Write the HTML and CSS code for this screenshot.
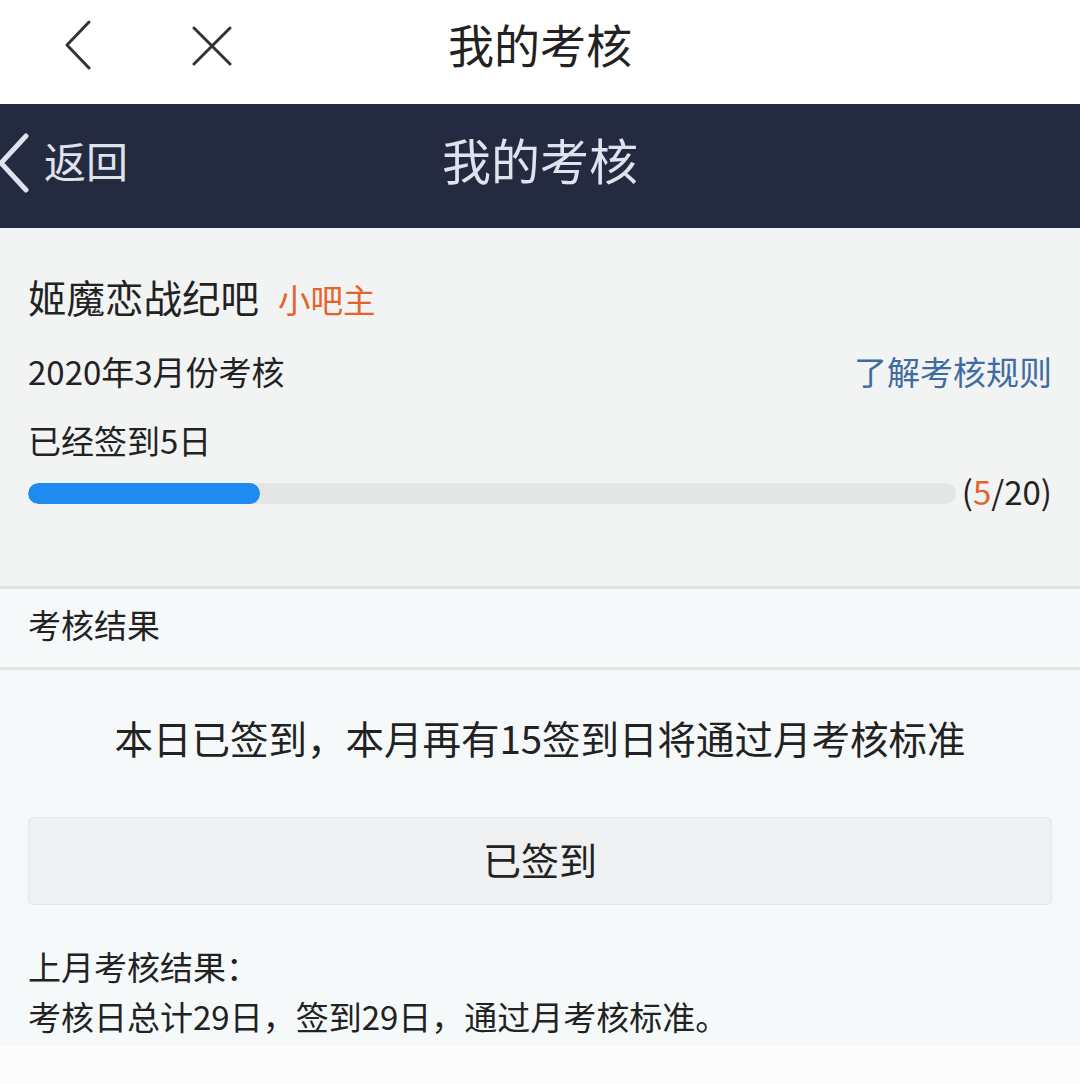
FILE: index.html
```html
<!DOCTYPE html>
<html lang="zh-CN">
<head>
  <meta charset="UTF-8" />
  <title>我的考核</title>
  <link rel="stylesheet" href="styles.css">
</head>
<body>
  <div class="topbar">
    <div class="top-icons">
      <svg class="icon-back" width="30" height="50" viewBox="0 0 30 50">
        <polyline points="25,2 3,25 25,48" fill="none" stroke="#333" stroke-width="3" stroke-linecap="round" stroke-linejoin="round" />
      </svg>
      <svg class="icon-close" width="40" height="40" viewBox="0 0 40 40">
        <path d="M2 2 L38 38 M38 2 L2 38" fill="none" stroke="#333" stroke-width="3" stroke-linecap="round" />
      </svg>
    </div>
    <div class="top-title">我的考核</div>
    <div></div>
  </div>

  <div class="navbar">
    <div class="nav-back">
      <svg width="34" height="62" viewBox="0 0 34 62">
        <polyline points="30,4 5,31 30,58" fill="none" stroke="#dfe3ee" stroke-width="5" stroke-linecap="round" stroke-linejoin="round" />
      </svg>
      <span class="nav-back-text">返回</span>
    </div>
    <div class="nav-title">我的考核</div>
    <div></div>
  </div>

  <div class="summary">
    <div class="bar-name">姬魔恋战纪吧<span class="role">小吧主</span></div>
    <div class="month-row">
      <span>2020年3月份考核</span>
      <a class="rules">了解考核规则</a>
    </div>
    <div class="signed">已经签到5日</div>
    <div class="progress-row">
      <div class="track"><div class="fill" style="width: 25%"></div></div>
      <div class="count">(<span class="now">5</span>/20)</div>
    </div>
  </div>

  <div class="section-head">考核结果</div>

  <div class="result">
    <div class="notice">本日已签到，本月再有15签到日将通过月考核标准</div>
    <button class="sign-btn">已签到</button>
    <div class="last">
      <div>上月考核结果：</div>
      <div>考核日总计29日，签到29日，通过月考核标准。</div>
    </div>
  </div>
</body>
</html>
```

FILE: styles.css
```css
body {
  margin: 0;
  background-color: #fcfcfc;
  font-family: "Noto Sans CJK SC", "Noto Sans", sans-serif;
  color: #222;
}
.topbar {
  height: 104px;
  background-color: #fff;
  display: grid;
  grid-template-columns: 1fr auto 1fr;
  align-items: center;
}
.top-icons {
  display: flex;
  align-items: center;
  gap: 98px;
  padding-left: 64px;
  margin-top: -14px;
}
.icon-close {
  margin-top: 2px;
}
.top-title {
  font-size: 46px;
  color: #222;
  margin-top: -18px;
}
.navbar {
  height: 124px;
  background-color: #242a3f;
  display: grid;
  grid-template-columns: 1fr auto 1fr;
  align-items: center;
  color: #dfe3ee;
}
.nav-back {
  display: flex;
  align-items: center;
  gap: 14px;
  font-size: 42px;
  margin-left: -4px;
  margin-top: -6px;
}
.nav-back-text {
  margin-top: -8px;
}
.nav-title {
  font-size: 49px;
  margin-top: -16px;
}
.summary {
  background-color: #f2f4f4;
  padding: 46px 28px 71px;
  font-size: 33px;
}
.bar-name {
  font-size: 38.5px;
  line-height: 44px;
  color: #222;
}
.role {
  font-size: 32.5px;
  color: #e5622a;
  margin-left: 19px;
}
.month-row {
  display: flex;
  justify-content: space-between;
  line-height: 44px;
  margin-top: 28px;
}
.rules {
  color: #3f6ba3;
}
.signed {
  line-height: 44px;
  margin-top: 25px;
}
.progress-row {
  display: flex;
  align-items: center;
  gap: 6px;
  height: 44px;
  margin-top: 9px;
}
.track {
  flex: 1;
  height: 21px;
  border-radius: 11px;
  background-color: #e4e5e5;
  overflow: hidden;
}
.fill {
  height: 100%;
  border-radius: 11px;
  background-color: #1f8bf0;
}
.count {
  color: #222;
  margin-top: -4px;
}
.now {
  color: #e5622a;
}
.section-head {
  border-top: 3px solid #e1e3e1;
  border-bottom: 3px solid #e1e3e1;
  height: 70px;
  line-height: 70px;
  padding: 0 0 8px 28px;
  font-size: 33px;
  background-color: #f6f9fa;
}
.result {
  background-color: #f6f9fa;
  padding: 45px 28px 5px;
}
.notice {
  text-align: center;
  font-size: 38.5px;
  line-height: 44px;
}
.sign-btn {
  display: block;
  width: 100%;
  height: 88px;
  margin-top: 58px;
  padding: 0 0 6px;
  background-color: #eef0f1;
  border: 1px solid #e4e7e8;
  border-radius: 5px;
  font-family: inherit;
  font-size: 38px;
  color: #222;
}
.last {
  margin-top: 36px;
  font-size: 33px;
  line-height: 50px;
}
```
